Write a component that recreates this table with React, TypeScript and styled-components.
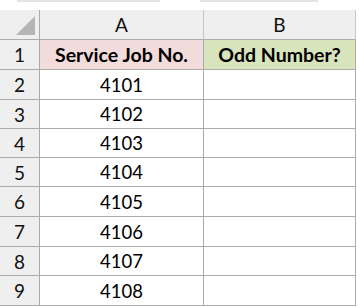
import React from 'react';
import styled, { createGlobalStyle } from 'styled-components';

const GlobalStyle = createGlobalStyle`
  html, body {
    margin: 0;
    padding: 0;
    background: #ffffff;
  }
  body {
    font-family: Lato, "Liberation Sans", sans-serif;
  }
`;

const jobs = [4101, 4102, 4103, 4104, 4105, 4106, 4107, 4108];

const Sheet = styled.div`
  width: 359px;
  height: 307px;
  overflow: hidden;
  display: grid;
  grid-template-columns: 40px 164px 152px 3px;
  grid-template-rows: 10px 30px 30px 30px 29px 29px 29px 30px 30px 29px 30px 1px;
  background: #ffffff;
`;

const TopStrip = styled.div`
  grid-column: 1 / -1;
  display: flex;
  gap: 40px;
  padding-left: 17px;
  background: #ffffff;
`;

const StripBar = styled.div<{ $w: number }>`
  width: ${(p) => p.$w}px;
  height: 2px;
  background: #e4e4e4;
`;

const Corner = styled.div`
  background: #efefef;
  border-right: 1px solid #ababab;
  border-bottom: 1px solid #ababab;
  display: flex;
  align-items: flex-end;
  justify-content: flex-end;
  padding: 0 4px 4px 0;
`;

const Triangle = styled.div`
  width: 0;
  height: 0;
  border-left: 19px solid transparent;
  border-bottom: 19px solid #b5b5b5;
`;

const ColHead = styled.div`
  background: #efefef;
  border-right: 1px solid #c6c6c6;
  border-bottom: 1px solid #ababab;
  display: flex;
  align-items: center;
  justify-content: center;
  font-size: 19px;
  color: #111111;
`;

const RowHead = styled.div`
  background: #efefef;
  border-right: 1px solid #ababab;
  border-bottom: 1px solid #ababab;
  display: flex;
  align-items: center;
  justify-content: center;
  font-size: 19px;
  color: #111111;
`;

const Cell = styled.div<{ $bg?: string; $bold?: boolean }>`
  background: ${(p) => p.$bg || '#ffffff'};
  border-right: 1px solid #ababab;
  border-bottom: 1px solid #ababab;
  display: flex;
  align-items: center;
  justify-content: center;
  font-size: ${(p) => (p.$bold ? 19.5 : 18.5)}px;
  font-weight: ${(p) => (p.$bold ? 700 : 400)};
  color: #000000;
  white-space: nowrap;
`;

const Edge = styled.div`
  background: #ffffff;
`;

export default function App() {
  return (
    <>
      <GlobalStyle />
      <Sheet>
        <TopStrip>
          <StripBar $w={143} />
          <StripBar $w={118} />
        </TopStrip>

        <Corner>
          <Triangle />
        </Corner>
        <ColHead>A</ColHead>
        <ColHead>B</ColHead>
        <Edge />

        <RowHead>1</RowHead>
        <Cell $bg="#f2dcdb" $bold>
          Service Job No.
        </Cell>
        <Cell $bg="#d8e4bc" $bold>
          Odd Number?
        </Cell>
        <Edge />

        {jobs.map((job, i) => (
          <React.Fragment key={job}>
            <RowHead>{i + 2}</RowHead>
            <Cell>{job}</Cell>
            <Cell />
            <Edge />
          </React.Fragment>
        ))}
      </Sheet>
    </>
  );
}
